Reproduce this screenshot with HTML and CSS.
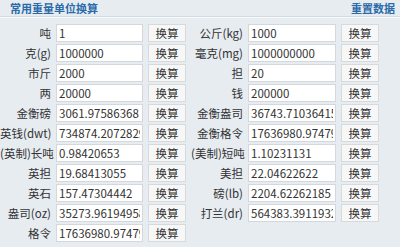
FILE: index.html
```html
<!DOCTYPE html>
<html lang="zh-CN">
<head>
<meta charset="utf-8">
<title>常用重量单位换算</title>
<link rel="stylesheet" href="styles.css">
</head>
<body>
<div class="panel">
  <div class="head">
    <span class="title">常用重量单位换算</span>
    <a class="reset" href="#">重置数据</a>
  </div>
  <div class="grid">
    <label class="lbl">吨</label><input class="val" type="text" value="1"><button class="btn">换算</button>
    <label class="lbl">公斤(kg)</label><input class="val" type="text" value="1000"><button class="btn">换算</button>

    <label class="lbl">克(g)</label><input class="val" type="text" value="1000000"><button class="btn">换算</button>
    <label class="lbl">毫克(mg)</label><input class="val" type="text" value="1000000000"><button class="btn">换算</button>

    <label class="lbl">市斤</label><input class="val" type="text" value="2000"><button class="btn">换算</button>
    <label class="lbl">担</label><input class="val" type="text" value="20"><button class="btn">换算</button>

    <label class="lbl">两</label><input class="val" type="text" value="20000"><button class="btn">换算</button>
    <label class="lbl">钱</label><input class="val" type="text" value="200000"><button class="btn">换算</button>

    <label class="lbl">金衡磅</label><input class="val" type="text" value="3061.97586368"><button class="btn">换算</button>
    <label class="lbl">金衡盎司</label><input class="val" type="text" value="36743.71036415"><button class="btn">换算</button>

    <label class="lbl">英钱(dwt)</label><input class="val" type="text" value="734874.20728293"><button class="btn">换算</button>
    <label class="lbl">金衡格令</label><input class="val" type="text" value="17636980.97479"><button class="btn">换算</button>

    <label class="lbl">(英制)长吨</label><input class="val" type="text" value="0.98420653"><button class="btn">换算</button>
    <label class="lbl">(美制)短吨</label><input class="val" type="text" value="1.10231131"><button class="btn">换算</button>

    <label class="lbl">英担</label><input class="val" type="text" value="19.68413055"><button class="btn">换算</button>
    <label class="lbl">美担</label><input class="val" type="text" value="22.04622622"><button class="btn">换算</button>

    <label class="lbl">英石</label><input class="val" type="text" value="157.47304442"><button class="btn">换算</button>
    <label class="lbl">磅(lb)</label><input class="val" type="text" value="2204.62262185"><button class="btn">换算</button>

    <label class="lbl">盎司(oz)</label><input class="val" type="text" value="35273.96194958"><button class="btn">换算</button>
    <label class="lbl">打兰(dr)</label><input class="val" type="text" value="564383.39119329"><button class="btn">换算</button>

    <label class="lbl">格令</label><input class="val" type="text" value="17636980.97479"><button class="btn">换算</button>
  </div>
</div>
</body>
</html>
```
FILE: styles.css
```css
html, body {
  margin: 0;
  padding: 0;
  background: #e7ecf1;
}
body {
  width: 400px;
  height: 247px;
  overflow: hidden;
  font-family: "Noto Sans CJK SC", "Noto Sans", sans-serif;
  color: #333;
}
.panel {
  padding: 0;
}
.head {
  display: flex;
  justify-content: space-between;
  align-items: center;
  height: 16px;
  padding: 0 5px 0 10px;
  border-bottom: 1px solid #d3dbe3;
  box-shadow: 0 1px 0 #f7f9fb;
}
.title {
  font-size: 11px;
  font-weight: bold;
  color: #2a6aa8;
  line-height: 16px;
}
.reset {
  font-size: 11px;
  font-weight: bold;
  color: #2a6aa8;
  text-decoration: none;
  line-height: 16px;
}
.grid {
  display: grid;
  grid-template-columns: 51px 87px 38px 52px 88px 38px;
  column-gap: 5px;
  row-gap: 2px;
  grid-auto-rows: 18px;
  margin-top: 7px;
}
.lbl {
  font-size: 11.5px;
  text-align: right;
  line-height: 18px;
  white-space: nowrap;
  color: #333;
}
.val {
  box-sizing: border-box;
  width: 100%;
  height: 18px;
  margin: 0;
  padding: 0 2px;
  border: 1px solid #d4d8dc;
  background: #fff;
  font-family: "Noto Sans CJK SC", "Noto Sans", sans-serif;
  font-size: 11.5px;
  color: #333;
  outline: none;
}
.btn {
  box-sizing: border-box;
  width: 100%;
  height: 18px;
  margin: 0;
  padding: 0;
  border: 1px solid #d6dadd;
  border-radius: 0;
  background: #f7f7f7;
  font-family: "Noto Sans CJK SC", sans-serif;
  font-size: 11.5px;
  color: #333;
  line-height: 16px;
}
```
